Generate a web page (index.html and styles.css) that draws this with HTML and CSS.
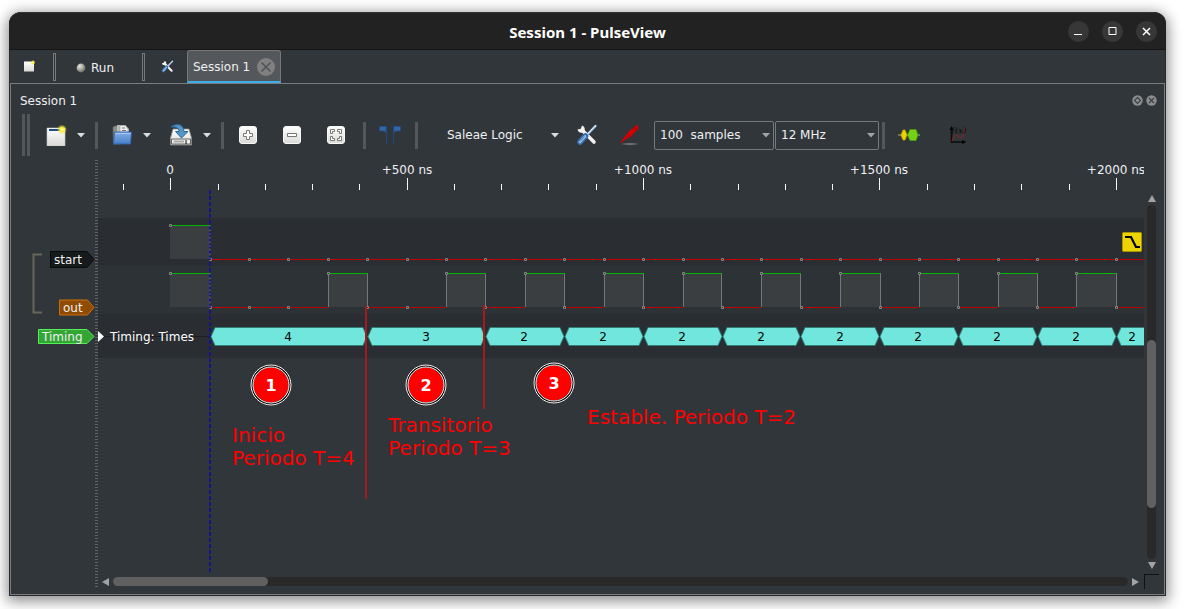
FILE: index.html
```html
<!DOCTYPE html>
<html lang="es">
<head>
<meta charset="utf-8">
<meta name="viewport" content="width=device-width, initial-scale=1">
<title>Session 1 - PulseView</title>
<link rel="stylesheet" href="styles.css">
</head>
<body>
<svg class="defs" aria-hidden="true">
  <defs>
    <linearGradient id="paper" x1="0" y1="0" x2="0" y2="1"><stop offset="0" stop-color="#ffffff"/><stop offset="1" stop-color="#d9d9d6"/></linearGradient>
    <linearGradient id="blue" x1="0" y1="0" x2="0" y2="1"><stop offset="0" stop-color="#84b0e4"/><stop offset="1" stop-color="#477fc9"/></linearGradient>
    <radialGradient id="ball" cx=".35" cy=".3" r=".8"><stop offset="0" stop-color="#e8e8e2"/><stop offset=".5" stop-color="#a4a69e"/><stop offset="1" stop-color="#5c5e58"/></radialGradient>
    <radialGradient id="glow"><stop offset="0" stop-color="#ffffc0"/><stop offset=".4" stop-color="#f7ee3c"/><stop offset="1" stop-color="#f0e020" stop-opacity="0"/></radialGradient>
    <radialGradient id="shade"><stop offset="0" stop-color="#8a8c8e"/><stop offset="1" stop-color="#8a8c8e" stop-opacity="0"/></radialGradient>
    <symbol id="tools" viewBox="0 0 22 22">
      <path d="M6.500 6.500 18 18" stroke="#f2f2f0" stroke-width="3.600" stroke-linecap="round"/>
      <path d="M6 1.500 4.800 4.800 1.500 5.600C2.300 8.800 5.500 9.600 8 8 9.500 5.500 8.800 2.300 6 1.500Z" fill="#f2f2f0"/>
      <path d="M19.500 2 11 11" stroke="#d8e4f2" stroke-width="2.200" stroke-linecap="round"/>
      <path d="M20 2.500 11.500 11.500" stroke="#4f83bf" stroke-width=".8"/>
      <path d="M9.500 12 4 18" stroke="#346cad" stroke-width="5.600" stroke-linecap="round"/>
      <path d="M9 12.500 4 18" stroke="#9dbfe4" stroke-width="2.600" stroke-linecap="round"/>
      <path d="M8.500 12.500 4 17.500" stroke="#346cad" stroke-width=".8"/>
    </symbol>
  </defs>
</svg>
<main class="window">
  <header class="titlebar">
    <h1 class="title">Session 1 - PulseView</h1>
    <div class="controls">
      <button class="control" aria-label="Minimize"><svg width="21" height="21"><path d="M6 13.500h8" stroke="#fff"/></svg></button>
      <button class="control" aria-label="Maximize"><svg width="21" height="21"><path d="M7 6.500h7v7h-7z" fill="none" stroke="#fff"/></svg></button>
      <button class="control" aria-label="Close"><svg width="21" height="21"><path d="m7 7 7 7m0-7-7 7" stroke="#fff" stroke-width="1.500"/></svg></button>
    </div>
  </header>
  <nav class="mainbar">
    <button class="main-button" aria-label="New session"><svg width="13" height="13"><path d="M1 1.500h10v10H1z" fill="url(#paper)"/><circle cx="10" cy="2.500" r="2.500" fill="url(#glow)"/></svg></button>
    <span class="double-line"></span>
    <button class="run"><svg width="10" height="10"><circle cx="5" cy="5" r="4.400" fill="url(#ball)"/></svg>Run</button>
    <span class="double-line"></span>
    <button class="main-button settings" aria-label="Settings"><svg width="13" height="13"><use href="#tools"/></svg></button>
    <div class="tab"><button class="tab-name">Session 1</button><button class="tab-close" aria-label="Close session"><svg width="18" height="18"><circle cx="9" cy="9" r="9" fill="#808080"/><path d="m4.500 4.500 9 9m0-9-9 9" stroke="#515355" stroke-width="1.600"/></svg></button></div>
  </nav>
  <section class="dock">
    <div class="dock-title"><h2 class="dock-name">Session 1</h2>
      <div class="dock-buttons">
        <button class="dock-button" aria-label="Float"><svg width="11" height="11"><circle cx="5.500" cy="5.500" r="5.200" fill="#8b8d8f"/><path d="M5.500 2.500 8.500 5.500 5.500 8.500 2.500 5.500Z" fill="none" stroke="#3d4145" stroke-width="1.200"/></svg></button>
        <button class="dock-button" aria-label="Close"><svg width="11" height="11"><circle cx="5.500" cy="5.500" r="5.200" fill="#8b8d8f"/><path d="m3 3 5 5m0-5-5 5" stroke="#3d4145" stroke-width="1.200"/></svg></button>
      </div>
    </div>
    <div class="toolbar">
      <span class="handle"></span>
      <button class="tool" aria-label="New view"><svg width="22" height="22"><path d="M2 4h18v18H2z" fill="url(#paper)" stroke="#c8c8c4" stroke-width=".6"/><path d="M4 5h15v2H4z" fill="#1f4b86"/><circle cx="17" cy="5.500" r="5" fill="url(#glow)"/></svg></button>
      <button class="arrow" aria-label="View types"><svg width="8" height="5"><path d="M0 0h8L4 4.500Z"/></svg></button>
      <span class="sep"></span>
      <button class="tool" aria-label="Open"><svg width="22" height="22"><path d="M2 3.500 3.500 2H9v18H2.500Z" fill="#8c8e8b" stroke="#666864" stroke-width=".8"/><path d="M6 1h8l4 4v5H6Z" fill="#b9bbb7"/><path d="M9 1.500h5.500L17 5v6H9Z" fill="#efefed" stroke="#999b98" stroke-width=".6"/><path d="M11 4h3M11 6.500h4" stroke="#777"/><path d="M3.500 8h17l-1 12H2.500Z" fill="url(#blue)" stroke="#2f65ad"/><path d="M4 9.500h15.500" stroke="#a8c9ef"/></svg></button>
      <button class="arrow" aria-label="Open options"><svg width="8" height="5"><path d="M0 0h8L4 4.500Z"/></svg></button>
      <button class="tool save" aria-label="Save"><svg width="24" height="24"><path d="M4 6h16l2.500 9v7h-21v-7Z" fill="url(#paper)" stroke="#888a85" stroke-width=".8"/><path d="M2.500 16h19v5h-19Z" fill="#eee" stroke="#555" stroke-width=".9"/><path d="M4.500 18.500H15" stroke="#aaa" stroke-width="2"/><path d="M17 17v4" stroke="#111"/><path d="M2 4C6 .5 14.500 0 15 8.500h4L12.500 15 6.500 8.500H10C10 4.500 6.500 3.500 2 4Z" fill="#5595c7" stroke="#2e6692"/></svg></button>
      <button class="arrow" aria-label="Save options"><svg width="8" height="5"><path d="M0 0h8L4 4.500Z"/></svg></button>
      <span class="sep"></span>
      <button class="tool zoom" aria-label="Zoom in"><svg width="20" height="20"><rect x="1.500" y="1.500" width="17" height="17" rx="2.500" fill="url(#paper)" stroke="#f8f8f6"/><path d="M8.500 5.500h3v3h3v3h-3v3h-3v-3h-3v-3h3z" fill="#fff" stroke="#777"/></svg></button>
      <button class="tool zoom" aria-label="Zoom out"><svg width="20" height="20"><rect x="1.500" y="1.500" width="17" height="17" rx="2.500" fill="url(#paper)" stroke="#f8f8f6"/><path d="M5.500 8.500h9v3h-9z" fill="#fff" stroke="#777"/></svg></button>
      <button class="tool zoom" aria-label="Zoom to fit"><svg width="20" height="20"><rect x="1.500" y="1.500" width="17" height="17" rx="2.500" fill="url(#paper)" stroke="#f8f8f6"/><path d="M4.500 8.500v-4h4v2h-2v2zM11.500 4.500h4v4h-2v-2h-2zM4.500 11.500h2v2h2v2h-4zM13.500 11.500h2v4h-4v-2h2z" fill="#fff" stroke="#777"/></svg></button>
      <span class="sep"></span>
      <button class="tool" aria-label="Show cursors"><svg width="22" height="20"><path d="M.5 1.500h7v17M21.500 1.500h-7v17" fill="none" stroke="#204a87"/><path d="M.5 1.500H7v6L5 6H.5ZM21.500 1.500H15v6L17 6h4.500Z" fill="#3465a4" stroke="#204a87" stroke-width=".6"/></svg></button>
      <span class="sep wide"></span>
      <button class="device">Saleae Logic<svg class="down" width="8" height="5"><path d="M0 0h8L4 4.500Z"/></svg></button>
      <button class="tool" aria-label="Configure device"><svg width="22" height="22"><use href="#tools"/></svg></button>
      <button class="tool probe" aria-label="Configure channels"><svg width="24" height="24"><ellipse cx="13" cy="21" rx="10" ry="1.600" fill="url(#shade)"/><path d="M2 21 9.500 11.500l3.500-4.500 2.500-1L19 2l1 1 1.500-.8-.5 4.500-4.500 3.500-1.500 3-3.500 1.500Z" fill="#d40000"/><path d="m10.500 11 3.500 3M17 4l3 3" stroke="#900000" stroke-width=".7"/></svg></button>
      <label class="combo"><select class="select" aria-label="Sample count"><option>100&nbsp; samples</option></select><svg class="combo-arrow" width="8" height="5"><path d="M0 0h8L4 4.500Z"/></svg></label>
      <label class="combo rate"><select class="select" aria-label="Sample rate"><option>12 MHz</option></select><svg class="combo-arrow" width="8" height="5"><path d="M0 0h8L4 4.500Z"/></svg></label>
      <span class="sep last"></span>
      <button class="tool decode" aria-label="Add protocol decoder"><svg width="22" height="14"><path d="M0 7h22" stroke="#aaa"/><path d="M3 7 5 2h2l2 5-2 5H5Z" fill="#edd400" stroke="#c4a000" stroke-width=".8"/><path d="M9.500 7 12 1.500h6L20 7l-2 5.500h-6Z" fill="#73d216" stroke="#4e9a06" stroke-width=".8"/></svg></button>
      <button class="tool math" aria-label="Add math signal"><svg width="20" height="20"><path d="M3.500 3v14H17" fill="none" stroke="#0b0b0b" stroke-width="1.600"/><path d="M1.500 5 3.500 1l2 4ZM14 15l4 2-4 2Z"/><path d="M4 16C7 8 9 10 11 12s5 1 6-9" fill="none" stroke="#a51c1c"/><text x="3" y="8" class="formula">f(x)</text></svg></button>
    </div>
    <div class="view">
      <aside class="channels">
        <svg class="bracket" width="12" height="64"><path d="M11 2.500H2v58h9" fill="none" stroke="#34362f" stroke-width="4"/><path d="M11 2.500H2.500v58H11" fill="none" stroke="#666760" stroke-width="2"/></svg>
        <span class="flag start"><svg width="45" height="17"><path d="M.5.500H37L44 8.500 37 16.500H.5Z"/></svg><b>start</b></span>
        <span class="flag out"><svg width="36" height="17"><path d="M.5 1H28.500L35 8.500 28.500 16H.5Z"/></svg><b>out</b></span>
        <span class="flag timing"><svg width="57" height="17"><path d="M.5 1.500H49L56 8.500 49 15.500H.5Z"/></svg><b>Timing</b></span>
      </aside>
      <div class="splitter"></div>
      <div class="canvas">
        <svg class="trace" width="100%" height="100%">
          <defs>
            <marker id="dot" markerUnits="userSpaceOnUse" markerWidth="3" markerHeight="3" refX="1.500" refY="1.500"><path d="M.5.500h2v2h-2z" fill="#333" stroke="#858585"/></marker>
          </defs>
          <g transform="translate(-98 -160)">
            <g class="rows"><rect x="98" y="218" width="100%" height="48"/><rect class="odd" x="98" y="266" width="100%" height="48"/><rect x="98" y="314" width="100%" height="44"/></g>
            <path class="ticks" d="M123.500 184v6M218.500 184v6M265.500 184v6M312.500 184v6M359.500 184v6M454.500 184v6M501.500 184v6M548.500 184v6M596.500 184v6M690.500 184v6M738.500 184v6M785.500 184v6M832.500 184v6M927.500 184v6M974.500 184v6M1021.500 184v6M1069.500 184v6M170.500 178v12M407.500 178v12M643.500 178v12M879.500 178v12M1116.500 178v12"/>
            <g class="label"><text x="170" y="174">0</text><text x="407" y="174">+500 ns</text><text x="643" y="174">+1000 ns</text><text x="879" y="174">+1500 ns</text><text x="1116" y="174">+2000 ns</text></g>
            <path class="fill" d="M170 225h40v34h-40zM170 273h40v34h-40zM328 273h40v34h-40zM446 273h40v34h-40zM525 273h40v34h-40zM604 273h40v34h-40zM683 273h39v34h-39zM761 273h40v34h-40zM840 273h40v34h-40zM919 273h40v34h-40zM998 273h40v34h-40zM1076 273h40v34h-40z"/>
            <path class="edge" d="M328.500 273v34M367.500 273v34M446.500 273v34M485.500 273v34M525.500 273v34M564.500 273v34M604.500 273v34M643.500 273v34M683.500 273v34M721.500 273v34M761.500 273v34M800.500 273v34M840.500 273v34M880.500 273v34M919.500 273v34M958.500 273v34M998.500 273v34M1037.500 273v34M1076.500 273v34M1116.500 273v34"/>
            <path class="high" d="M170 225.500h40M170 273.500h40M328 273.500h40M446 273.500h40M525 273.500h40M604 273.500h40M683 273.500h39M761 273.500h40M840 273.500h40M919 273.500h40M998 273.500h40M1076 273.500h40"/>
            <path class="low" d="M210 259.500h4000M210 307.500h118M368 307.500h78M486 307.500h39M565 307.500h39M644 307.500h39M722 307.500h39M801 307.500h39M880 307.500h39M959 307.500h39M1038 307.500h38M1116 307.500h3000"/>
            <polyline class="samples" points="170.500,225.500 210.500,259.500 249.500,259.500 288.500,259.500 328.500,259.500 367.500,259.500 407.500,259.500 446.500,259.500 485.500,259.500 525.500,259.500 564.500,259.500 604.500,259.500 643.500,259.500 683.500,259.500 722.500,259.500 761.500,259.500 801.500,259.500 840.500,259.500 880.500,259.500 919.500,259.500 958.500,259.500 998.500,259.500 1037.500,259.500 1076.500,259.500 1116.500,259.500"/>
            <polyline class="samples" points="170.500,273.500 210.500,307.500 249.500,307.500 288.500,307.500 328.500,273.500 367.500,307.500 407.500,307.500 446.500,273.500 485.500,307.500 525.500,273.500 564.500,307.500 604.500,273.500 643.500,307.500 683.500,273.500 722.500,307.500 761.500,273.500 801.500,307.500 840.500,273.500 880.500,307.500 919.500,273.500 958.500,307.500 998.500,273.500 1037.500,307.500 1076.500,273.500 1116.500,307.500"/>
            <path d="M98 336.500h114" stroke="#1b1d20"/>
            <path class="expand" d="M98 331v11l6-5.500Z"/>
            <text class="row-name" x="110" y="341">Timing: Times</text>
            <path class="cursor" d="M210 190v383"/>
            <path class="cursor-edge" d="M210 225v34M210 273v34"/>
            <path class="note" d="M211 336.500l4-9H363l4 9-4 9H215ZM368 336.500l4-9H481l4 9-4 9H372ZM486 336.500l4-9H560l4 9-4 9H490ZM565 336.500l4-9H639l4 9-4 9H569ZM644 336.500l4-9H718l4 9-4 9H648ZM723 336.500l4-9H796l4 9-4 9H727ZM801 336.500l4-9H875l4 9-4 9H805ZM880 336.500l4-9H954l4 9-4 9H884ZM959 336.500l4-9H1033l4 9-4 9H963ZM1038 336.500l4-9H1112l4 9-4 9H1042ZM1117 336.500l4-9H1150v18H1121Z"/>
            <g class="value"><text x="288" y="341">4</text><text x="426" y="341">3</text><text x="524" y="341">2</text><text x="603" y="341">2</text><text x="682" y="341">2</text><text x="761" y="341">2</text><text x="840" y="341">2</text><text x="918" y="341">2</text><text x="997" y="341">2</text><text x="1076" y="341">2</text><text x="1132" y="341">2</text></g>
            <path class="divider" d="M366 306v193M484 305v104"/>
            <rect x="1122.500" y="232.500" width="19" height="19" rx="1" fill="#edd400" stroke="#a89400"/>
            <path d="M1125 237h6l5 10h4" fill="none" stroke="#000" stroke-width="2.200"/>
            <g class="badge"><circle class="halo" cx="271" cy="385" r="19"/><circle class="ring" cx="271" cy="385" r="20"/><circle class="ring" cx="271" cy="385" r="18"/><text x="271" y="391">1</text></g>
            <g class="badge"><circle class="halo" cx="426" cy="385" r="19"/><circle class="ring" cx="426" cy="385" r="20"/><circle class="ring" cx="426" cy="385" r="18"/><text x="426" y="391">2</text></g>
            <g class="badge"><circle class="halo" cx="554" cy="383" r="19"/><circle class="ring" cx="554" cy="383" r="20"/><circle class="ring" cx="554" cy="383" r="18"/><text x="554" y="389">3</text></g>
            <g class="comment"><text x="232" y="442">Inicio</text><text x="232" y="465">Periodo T=4</text><text x="388" y="432">Transitorio</text><text x="388" y="455">Periodo T=3</text><text x="587" y="424">Estable. Periodo T=2</text></g>
          </g>
        </svg>
      </div>
      <div class="scroll vertical"><svg width="8" height="7"><path d="M4 0 8 7H0Z"/></svg><div class="track"><div class="thumb"></div></div><svg width="8" height="7"><path d="M0 0h8L4 7Z"/></svg></div>
      <div class="scroll horizontal"><svg width="7" height="8"><path d="M7 0v8L0 4Z"/></svg><div class="track"><div class="thumb"></div></div><svg width="7" height="8"><path d="M0 0v8l7-4Z"/></svg></div>
      <div class="corner"></div>
    </div>
  </section>
</main>
</body>
</html>
```
FILE: styles.css
```css
* { box-sizing: border-box; }
body {
  margin: 0;
  min-height: 100vh;
  display: flex;
  padding: 12px 18px 13px 9px;
  background: #fff;
  color: #eff0f1;
  font: 12px/16px "DejaVu Sans", sans-serif;
}
svg { display: block; flex: none; }
button { display: flex; align-items: center; justify-content: center; margin: 0; padding: 0; border: 0; background: none; color: inherit; font: inherit; }
h1, h2 { margin: 0; font: inherit; }
.defs { position: absolute; width: 0; height: 0; }
.window {
  flex: 1;
  min-width: 0;
  display: flex;
  flex-direction: column;
  padding: 0 1px 1px;
  overflow: hidden;
  border-radius: 12px 12px 0 0;
  background: #31363b;
  box-shadow: inset 0 0 0 1px #292c2f, 0 3px 14px 2px rgba(0, 0, 0, .46);
}
.titlebar { display: flex; align-items: center; position: relative; height: 38px; margin: 0 -1px; border-top: 1px solid #343434; border-bottom: 1px solid #151515; background: #222; border-radius: 12px 12px 0 0; }
.title { flex: 1; padding-top: 2px; text-align: center; font: bold 15px/20px "Noto Sans", sans-serif; color: #fff; }
.controls { position: absolute; right: 9px; display: flex; gap: 13px; }
.control { width: 21px; height: 21px; border-radius: 50%; background: #373737; }
.mainbar { display: flex; height: 33px; align-items: center; }
.main-button { width: 38px; height: 28px; }
.settings { width: 37px; padding-right: 2px; }
.double-line { width: 3px; height: 28px; margin: 0 5px; border: 1px solid #77797b; }
.run { width: 76px; gap: 5px; height: 28px; padding: 2px 8px 0 0; }
.tab { display: flex; align-self: stretch; align-items: center; width: 94px; padding: 2px 5px 0; gap: 7px; border: 1px solid #76797c; border-bottom: 2px solid #3daee9; border-radius: 3px 3px 0 0; background: #54575b; white-space: nowrap; }
.dock { flex: 1; display: flex; flex-direction: column; border: 1px solid #797c7f; min-width: 0; }
.dock-title { display: flex; justify-content: space-between; align-items: center; height: 33px; padding: 1px 7px 0 9px; }
.dock-name { line-height: 16px; }
.dock-buttons { display: flex; gap: 3px; padding-bottom: 2px; }
.toolbar { display: flex; align-items: center; height: 36px; margin-bottom: 7px; padding-left: 11px; white-space: nowrap; }
.handle { width: 8px; height: 42px; margin-right: 10px; border: solid #54565a; border-width: 0 3px; }
.tool { width: 32px; height: 32px; flex: none; }
.arrow { width: 18px; height: 32px; fill: #dcdddd; flex: none; }
.save { margin: 0 1px 0 9px; }
.sep { flex: none; width: 3px; height: 27px; margin: 0 9px 0 5px; background: #55585b; }
.arrow + .sep { margin-left: 5px; margin-right: 8px; }
.zoom { width: 44px; margin-right: 0; }
.arrow + .sep + .zoom { margin-left: -6px; }
.zoom + .sep { margin-right: 8px; }
.sep.wide { margin-left: 9px; margin-right: 25px; }
.device { width: 120px; height: 32px; padding: 0 4px; margin-right: 8px; justify-content: space-between; }
.down { fill: #dcdddd; }
.probe { margin: 0 9px 0 10px; }
.combo { position: relative; width: 120px; height: 29px; flex: none; }
.rate { width: 104px; margin-left: 1px; }
.select { width: 100%; height: 100%; padding: 0 5px; appearance: none; border: 1px solid #76797c; border-radius: 2px; background: #31363b; color: #eff0f1; font: 12px/16px "DejaVu Sans", sans-serif; }
.combo-arrow { position: absolute; right: 4px; top: 12px; fill: #a2a4a6; pointer-events: none; }
.sep.last { margin: 0 8px 0 3px; }
.math { margin-left: 17px; }
.formula { font: italic bold 8px "DejaVu Serif", serif; fill: #151515; }
.view { flex: 1; display: grid; grid-template-columns: 84px 3px minmax(0, 1fr) 20px; grid-template-rows: 1fr 20px; min-height: 0; }
.channels { position: relative; grid-row: 1 / 3; }
.bracket { position: absolute; left: 20px; top: 92px; }
.flag { position: absolute; right: 0; display: block; }
.flag b { position: absolute; left: 4px; top: 0; font-weight: normal; line-height: 18px; }
.start { top: 91px; }
.start path { fill: #171a1b; stroke: #0a0b0b; }
.out { top: 139px; }
.out path { fill: #8f4c00; stroke: #ce7008; }
.timing { top: 168px; }
.timing path { fill: #33a533; stroke: #55f055; }
.splitter { grid-row: 1 / 3; margin-bottom: 5px; background: repeating-linear-gradient(#626568 0 1px, #31363b 1px 3px); }
.canvas { position: relative; min-width: 0; overflow: hidden; }
.trace { position: absolute; inset: 0; }
.rows { fill: #2a2d32; }
.odd { fill: #2d3236; }
.ticks { stroke: #fff; shape-rendering: crispEdges; }
.label, .value { text-anchor: middle; fill: #eff0f1; }
.fill { fill: #3a3e40; }
.edge { stroke: #747677; }
.high { stroke: #00b700; shape-rendering: crispEdges; }
.low { stroke: #c00000; shape-rendering: crispEdges; }
.samples { fill: none; marker-start: url(#dot); marker-mid: url(#dot); marker-end: url(#dot); }
.expand, .row-name { fill: #fff; }
.cursor { stroke: #141491; stroke-width: 2; stroke-dasharray: 4 2; }
.cursor-edge { stroke: #5555a4; stroke-width: 1; stroke-dasharray: 2 2; }
.note { fill: #70e6dc; stroke: #327d78; stroke-width: 1; }
.value { fill: #000; }
.divider { stroke: #a51b1d; stroke-width: 2; }
.halo { fill: #f00; stroke: #050505; stroke-width: 3; }
.ring { fill: none; stroke: #fff; stroke-width: 1; }
.badge { text-anchor: middle; fill: #fff; font-size: 16px; font-weight: bold; }
.comment { fill: #f00; font-size: 20px; }
.scroll { display: flex; align-items: center; fill: #a3a3a3; }
.vertical { flex-direction: column; padding: 35px 8px 5px 3px; gap: 3px; }
.horizontal { padding: 0 5px 5px 4px; gap: 4px; grid-column: 3; }
.track { flex: 1; border-radius: 5px; background: #292929; }
.vertical .track { width: 9px; }
.horizontal .track { height: 9px; }
.thumb { border-radius: 5px; background: #606060; }
.vertical .thumb { height: 47.5%; position: relative; top: 38%; }
.horizontal .thumb { height: 9px; width: 15.3%; }
.corner { border: solid #101112; border-width: 1px 0 0 1px; margin: 0 5px 5px 0; }
```
